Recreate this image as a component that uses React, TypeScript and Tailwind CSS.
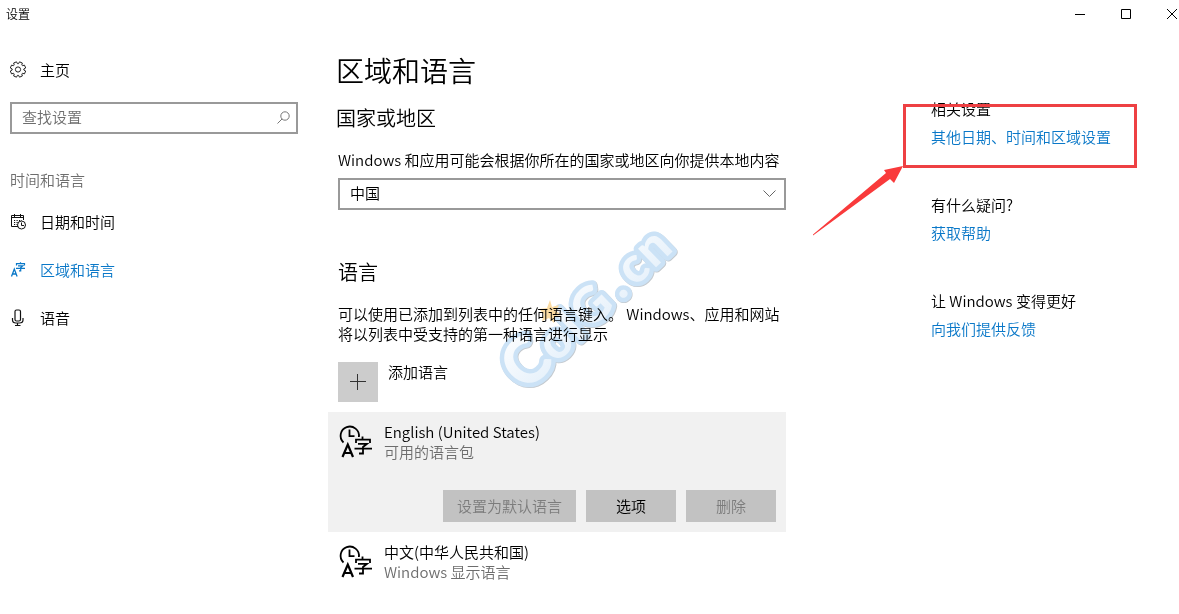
import type { ReactNode } from "react";

const gearPoints = (() => {
  const pts: string[] = [];
  for (let i = 0; i < 8; i++) {
    const base = ((i + 0.5) * Math.PI) / 4;
    const ring: [number, number][] = [
      [-0.3, 5.9],
      [-0.2, 7.8],
      [0.2, 7.8],
      [0.3, 5.9],
    ];
    ring.forEach(([a, r]) => pts.push(`${(8 + r * Math.sin(base + a)).toFixed(2)},${(8.5 - r * Math.cos(base + a)).toFixed(2)}`));
  }
  return pts.join(" ");
})();

function GearIcon() {
  return (
    <svg width="18" height="18" viewBox="0 0 18 18" fill="none" stroke="#222" strokeWidth="1" aria-hidden="true">
      <polygon points={gearPoints} strokeLinejoin="round" />
      <circle cx="8" cy="8.5" r="2.6" />
    </svg>
  );
}

function CalendarClockIcon() {
  return (
    <svg width="18" height="18" viewBox="0 0 18 18" fill="none" stroke="#111" aria-hidden="true">
      <path d="M8 13.5H1.5V2.5H13.5V7M1.5 4.5H13.5M4.5 1V4M10.5 1V4" />
      <path d="M4 7.500H12M4 9.500H8M4 11.500H7" strokeDasharray="1.2 1.3" />
      <circle cx="11.500" cy="12" r="4" />
      <path d="M11.500 9.500V12.500H14" />
    </svg>
  );
}

function MicIcon() {
  return (
    <svg width="18" height="18" viewBox="0 0 18 18" fill="none" stroke="#111" strokeWidth="1.2" aria-hidden="true">
      <rect x="5" y="1" width="5.500" height="11" rx="1.500" />
      <path d="M2.500 9V11Q2.500 14 6 14H9.500Q13 14 13 11V9M7.500 14V16.500M5 16.500H10.500" />
    </svg>
  );
}

function GlyphPairIcon() {
  return (
    <svg width="18" height="18" viewBox="0 0 18 18" fill="none" stroke="#0a78c8" aria-hidden="true">
      <path d="M1.500 15.500L4.300 8L7.100 15.500M2.500 13H6.200" strokeWidth="1.300" />
      <path d="M10.500 1.200V2.500M6.500 4.500V2.700H14.500V4.500M8 4.800H12.800L10.700 6.500V9.800H9M6 7.300H15" strokeWidth="1.200" />
    </svg>
  );
}

function LanguageIcon() {
  return (
    <svg className="shrink-0" width="36" height="36" viewBox="0 0 36 36" fill="none" stroke="#000" strokeWidth="1.8" aria-hidden="true">
      <path d="M5.500 20.500A9.200 9.200 0 1 1 20.900 15" />
      <path d="M11.500 7.500V14.200H16.500" />
      <path d="M4.500 35L9.800 22.500L15 35M6.500 31H13" strokeWidth="2.200" />
      <path d="M24.500 14.500V17.500M18 21V17.700H32V21M20 21.800H29L25 25V31.500H21M16.500 26.700H34" />
    </svg>
  );
}

function NavItem({ icon, label, active = false }: { icon: ReactNode; label: string; active?: boolean }) {
  return (
    <a href="#" className={`flex h-12 items-center gap-3 ${active ? "text-[#0a78c8]" : "text-black"}`}>
      {icon}
      {label}
    </a>
  );
}

function LanguageHeader({ name, detail }: { name: string; detail: string }) {
  return (
    <div className="flex gap-2.5">
      <LanguageIcon />
      <div className="leading-5">
        <p>{name}</p>
        <p className="text-[#6d6d6d]">{detail}</p>
      </div>
    </div>
  );
}

function RelatedLink({ title, link }: { title: string; link: string }) {
  return (
    <section className="leading-5">
      <h2>{title}</h2>
      <a href="#" className="mt-2 block text-[#0a78c8]">
        {link}
      </a>
    </section>
  );
}

function WatermarkText({ fill, outline, dy = 0 }: { fill: string; outline?: string; dy?: number }) {
  return (
    <text x="0 42 73 89 133 152 178" y={dy} fontSize="50" fill={fill} stroke={outline} strokeWidth={outline ? 9 : 0}>
      <tspan fontSize="64">C</tspan>olG.cn
    </text>
  );
}

function Watermark() {
  return (
    <svg
      className="pointer-events-none absolute top-[168px] left-[154px] mix-blend-multiply"
      width="220"
      height="210"
      viewBox="0 0 220 210"
      aria-hidden="true"
    >
      <defs>
        <linearGradient id="shine" x1="0" y1="0" x2="0" y2="1">
          <stop offset="0" stopColor="#ffffff" />
          <stop offset="1" stopColor="#e3effa" />
        </linearGradient>
      </defs>
      <g transform="translate(44 197) rotate(-44)" fontFamily="Lato, sans-serif" fontWeight="900" strokeLinejoin="round">
        <WatermarkText fill="#c4c9ce" outline="#c4c9ce" dy={1} />
        <WatermarkText fill="#cbe2f6" outline="#cbe2f6" />
        <WatermarkText fill="url(#shine)" />
      </g>
      <path d="M68 104L70 111L77 109L74 115L80 119L73 120L72 127L67 122L60 125L62 118L57 113L65 112Z" fill="#fbdca3" />
    </svg>
  );
}

const windowButton = "flex h-7 w-[46px] items-center justify-center";
const actionButton = "h-8 min-w-[90px] bg-[#c2c2c2] px-3.5 text-black disabled:text-[#7c7c7c]";

export default function App() {
  return (
    <div className="min-h-screen overflow-hidden bg-white font-['Noto_Sans_CJK_SC',sans-serif] text-[15px] font-[350] text-black">
      <header className="flex h-7 items-center justify-between pl-1.5 text-xs">
        <span>设置</span>
        <div className="-mr-4 flex">
          <button aria-label="最小化" className={windowButton}>
            <svg width="11" height="11" stroke="#000"><path d="M0 5.5H10" /></svg>
          </button>
          <button aria-label="最大化" className={windowButton}>
            <svg width="11" height="11" fill="none" stroke="#000"><path d="M.5 .5H9.5V9.5H.5Z" /></svg>
          </button>
          <button aria-label="关闭" className={windowButton}>
            <svg width="11" height="11" stroke="#000"><path d="M0 0L10 10M10 0L0 10" /></svg>
          </button>
        </div>
      </header>

      <div className="flex">
        <nav className="w-[328px] shrink-0 pt-4.5 pr-[30px] pl-2.5">
          <NavItem icon={<GearIcon />} label="主页" />
          <div className="mt-2 flex h-8 items-center border-2 border-[#999] pr-1.5 pb-0.5 pl-2.5">
            <input
              type="text"
              aria-label="查找设置"
              placeholder="查找设置"
              className="min-w-0 flex-1 outline-none placeholder:text-[#6d6d6d]"
            />
            <svg width="13" height="13" fill="none" stroke="#777" aria-hidden="true">
              <circle cx="8" cy="5" r="4.2" />
              <path d="M5 8L.5 12.5" />
            </svg>
          </div>
          <h2 className="mt-9 mb-2 leading-5 text-[#6d6d6d]">时间和语言</h2>
          <NavItem icon={<CalendarClockIcon />} label="日期和时间" />
          <NavItem icon={<GlyphPairIcon />} label="区域和语言" active />
          <NavItem icon={<MicIcon />} label="语音" />
        </nav>

        <main className="relative w-[458px] shrink-0 pt-[22px]">
          <div className="pl-2">
            <h1 className="text-[28px] leading-10">区域和语言</h1>
            <h2 className="mt-3.5 text-xl leading-7">国家或地区</h2>
          </div>
          <div className="pl-2.5">
            <label htmlFor="region" className="mt-4.5 block leading-5 whitespace-nowrap">
              Windows 和应用可能会根据你所在的国家或地区向你提供本地内容
            </label>
            <div className="relative mt-2">
              <select id="region" className="block h-8 w-full appearance-none border-2 border-[#999] bg-white px-2.5 pb-0.5">
                <option>中国</option>
              </select>
              <svg className="pointer-events-none absolute top-3 right-2.5" width="13" height="8" fill="none" stroke="#666" aria-hidden="true">
                <path d="M.5 .5L6.5 6.5L12.5 .5" />
              </svg>
            </div>
            <h2 className="mt-12 text-xl leading-7">语言</h2>
            <p className="mt-4.5 leading-5">
              可以使用已添加到列表中的任何语言键入。 Windows、应用和网站将以列表中受支持的第一种语言进行显示
            </p>
            <button className="mt-4.5 flex items-start gap-2.5">
              <span className="flex size-10 items-center justify-center bg-[#ccc]">
                <svg width="16" height="16" stroke="#333" aria-hidden="true"><path d="M0 7.5H16M7.5 0V16" /></svg>
              </span>
              <span className="leading-5">添加语言</span>
            </button>
          </div>

          <ul className="mt-2.5">
            <li className="bg-[#f1f1f1] px-2.5 py-2.5">
              <LanguageHeader name="English (United States)" detail="可用的语言包" />
              <div className="mt-7 flex justify-end gap-2.5">
                <button disabled className={actionButton}>设置为默认语言</button>
                <button className={actionButton}>选项</button>
                <button disabled className={actionButton}>删除</button>
              </div>
            </li>
            <li className="px-2.5 py-2.5">
              <LanguageHeader name="中文(中华人民共和国)" detail="Windows 显示语言" />
            </li>
          </ul>
          <Watermark />
        </main>

        <aside className="relative ml-[145px] flex flex-col gap-12 pt-[71px]">
          <RelatedLink title="相关设置" link="其他日期、时间和区域设置" />
          <RelatedLink title="有什么疑问?" link="获取帮助" />
          <RelatedLink title="让 Windows 变得更好" link="向我们提供反馈" />
          <div className="pointer-events-none absolute top-[76px] -left-7 h-16 w-[234px] border-3 border-[#ee4043]" />
          <svg className="pointer-events-none absolute top-[137px] -left-[120px]" width="94" height="72" fill="#f93a3b" aria-hidden="true">
            <path d="M2 69.500L75 8L73 5L92 1L83 18L79 14L77 15.500L2 70.500Z" />
          </svg>
        </aside>
      </div>
    </div>
  );
}
